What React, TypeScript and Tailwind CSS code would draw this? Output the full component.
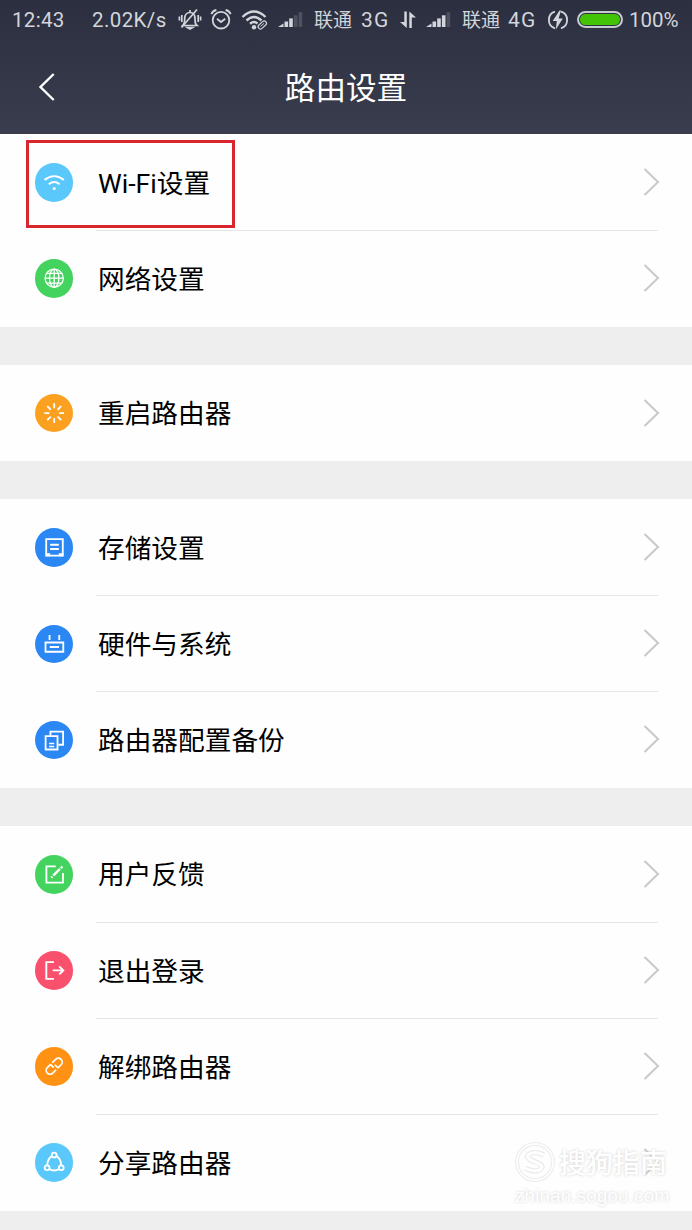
import type { ReactNode } from "react";

type Item = {
  label: string;
  color: string;
  icon: ReactNode;
  marked?: boolean;
};

// every glyph is drawn on a 38x38 box, centred on 19,19
const wifi = (
  <g strokeWidth="1.9" strokeLinecap="butt">
    <path d="M9.4 16.7Q19 9.3 28.6 16.7" />
    <path d="M13.6 21Q19 16.7 24.4 21" />
    <circle cx="19" cy="25.2" r="1.5" fill="white" stroke="none" />
  </g>
);

const globe = (
  <g strokeWidth="1.3">
    <circle cx="19" cy="19" r="9" />
    <ellipse cx="19" cy="19" rx="4.6" ry="9" />
    <path d="M19 10v18M10 19h18M11.8 14.2h14.4M11.8 23.8h14.4" />
  </g>
);

const restart = (
  <path
    strokeWidth="1.8"
    d="M19 9.2v5M19 23.8v5M9.2 19h5M23.8 19h5M12.1 12.1l3.5 3.5M22.4 22.4l3.5 3.5M25.9 12.1l-3.5 3.5M15.6 22.4l-3.5 3.5"
  />
);

const storage = (
  <g strokeWidth="1.8">
    <path d="M11.1 11h16.4v16.4H11.1z" />
    <path d="M15 16.6h8.6M15 20.8h8.6" />
    <path strokeWidth="3" d="M10.6 26.4h4.4M23.6 26.4h4.4" />
  </g>
);

const router = (
  <g strokeWidth="1.8">
    <path d="M10.4 17.3h17.6v9.2H10.4z" />
    <path d="M14.6 21.8h9.2M14.4 9.8v5M24 9.8v5" />
  </g>
);

const copy = (
  <g strokeWidth="1.8">
    <path d="M10.5 15h11.8v13.2H10.5z" />
    <path d="M15.3 14.5v-4h12.5v13h-4.8" />
    <path strokeWidth="1.5" d="M14 22.3h5M14 25.2h5" />
  </g>
);

const edit = (
  <g strokeWidth="1.8">
    <path d="M20.5 11.2h-9.2v16.2h16.4v-9.7" />
    <path strokeWidth="2.4" d="M16 22.5l1.2-1.2M18 20.5l6.7-6.7M25.6 12.9l1.5-1.5" />
  </g>
);

const logout = (
  <g strokeWidth="1.9">
    <path d="M18.8 11h-7.6v16.6h7.6" />
    <path d="M17.5 19.2h10.2M24 15.2l4 4-4 4" />
  </g>
);

const link = (
  <g strokeWidth="1.7" transform="rotate(-45 19 19)">
    <path d="M17.8 15.2h-4.6a3.8 3.8 0 0 0 0 7.6h4.6M20.2 22.8h4.6a3.8 3.8 0 0 0 0-7.6h-4.6M17.6 15.2v4.4M20.4 22.8v-4.4" />
  </g>
);

const share = (
  <g strokeWidth="1.8">
    <circle cx="19" cy="11.9" r="2.4" />
    <circle cx="12" cy="24.5" r="2.4" />
    <circle cx="26" cy="24.5" r="2.4" />
    <path d="M16.7 13Q12.3 15.7 12.2 21.9M21.3 13Q25.7 15.7 25.8 21.9M14.2 25.9Q19 28.5 23.8 25.9" />
  </g>
);

const groups: Item[][] = [
  [
    { label: "Wi-Fi设置", color: "bg-[#5ac8fa]", icon: wifi, marked: true },
    { label: "网络设置", color: "bg-[#44d35e]", icon: globe },
  ],
  [{ label: "重启路由器", color: "bg-[#fba01f]", icon: restart }],
  [
    { label: "存储设置", color: "bg-[#2a87f3]", icon: storage },
    { label: "硬件与系统", color: "bg-[#2a87f3]", icon: router },
    { label: "路由器配置备份", color: "bg-[#2a87f3]", icon: copy },
  ],
  [
    { label: "用户反馈", color: "bg-[#44d35e]", icon: edit },
    { label: "退出登录", color: "bg-[#f9506e]", icon: logout },
    { label: "解绑路由器", color: "bg-[#ff9212]", icon: link },
    { label: "分享路由器", color: "bg-[#5ac8fa]", icon: share },
  ],
];

function Signal({ bars }: { bars: number }) {
  return (
    <svg className="mb-[12px] w-[26px] h-[28px] shrink-0" viewBox="0 0 26 28" fill="#d3d5db">
      <path d="M0 27l5.5-3.5V27z" />
      {[0, 1, 2, 3].map((i) => (
        <rect key={i} x={6.5 + i * 4.7} y={21.5 - i * 3.1} width="3.6" height={5.5 + i * 3.1} opacity={i < bars ? 1 : 0.2} />
      ))}
    </svg>
  );
}

function StatusBar() {
  return (
    <div className="flex items-center h-[40px] pl-[12px] text-[#d3d5db] text-[20.5px] leading-[40px] whitespace-nowrap">
      <span className="w-[80px] shrink-0 tracking-[0.3px]">12:43</span>
      <span className="w-[86px] shrink-0 tracking-[0.4px]">2.02K/s</span>
      <svg className="mb-[2px] w-[24px] h-[24px] shrink-0" viewBox="0 0 24 24" fill="none" stroke="#d3d5db" strokeWidth="1.7">
        <path d="M5.5 18.5h13.5c-2-1.7-2-3-2-7 0-4-2-6-5-6s-5.3 2-5.3 6c0 4 0 5-2 7z" />
        <path d="M3.8 8v7M1.4 9.5v4M20.2 8v7M22.6 9.5v4M19 2.5L3.5 20.5M12 3v2.5" />
        <path d="M9.5 20.5h5l-2.5 1.5z" fill="#d3d5db" />
      </svg>
      <svg className="ml-[7px] w-[24px] h-[24px] shrink-0" viewBox="0 0 24 24" fill="none" stroke="#d3d5db" strokeWidth="1.8">
        <circle cx="12" cy="12.2" r="8.3" />
        <path d="M8 10.7l4 3.3 4.2-3.3M2.3 6.2Q3.7 2.7 7.4 2M21.7 6.2Q20.3 2.7 16.6 2" />
      </svg>
      <svg className="ml-[8px] w-[28px] h-[24px] shrink-0" viewBox="0 0 28 24" fill="none" stroke="#d3d5db" strokeWidth="2.4">
        <path d="M1.5 9Q13 -2 24.5 9M5.5 12.5Q13 5.5 20.5 12.5M9 15.8Q13 12.5 16.5 15.5" />
        <circle cx="13" cy="19.2" r="2.2" fill="#d3d5db" stroke="none" />
        <rect x="16.5" y="14.7" width="9.6" height="4.6" rx="2.3" strokeWidth="1.2" transform="rotate(-42 21.3 17)" />
        <path d="M19.5 18.5l3.6-3.2" strokeWidth="1" />
      </svg>
      <span className="ml-[9px] flex"><Signal bars={2} /></span>
      <span className="ml-[10px] w-[47px] shrink-0 pt-px text-[19px]">联通</span>
      <span className="w-[38px] shrink-0 text-[21px] tracking-[1.2px]">3G</span>
      <svg className="w-[18px] h-[24px] shrink-0" viewBox="0 0 18 24" fill="#d3d5db">
        <path d="M5.3 3.5h2.5V20L1 14h4.3zM10.3 20V3.5l6.7 6h-4.2V20z" />
      </svg>
      <span className="ml-[9px] flex"><Signal bars={3} /></span>
      <span className="ml-[10px] w-[46px] shrink-0 pt-px text-[19px]">联通</span>
      <span className="w-[39px] shrink-0 text-[21px] tracking-[1.2px]">4G</span>
      <svg className="w-[22px] h-[24px] shrink-0" viewBox="0 0 22 24" fill="none" stroke="#d3d5db" strokeWidth="1.8">
        <path d="M8 3.7a8.7 8.7 0 0 0 0 16.6M14 3.7a8.7 8.7 0 0 1 0 16.6" />
        <path d="M12.5 2.5L5.7 13h4.1L8.8 21.5l7-11h-4.2l2.4-8z" fill="#d3d5db" stroke="none" />
      </svg>
      <span className="ml-[8px] mb-[2px] w-[46px] h-[17px] shrink-0 rounded-full border-2 border-[#c6c9cf] p-px">
        <span className="block h-full rounded-full bg-[#43c307]" />
      </span>
      <span className="ml-[6px]">100%</span>
    </div>
  );
}

function Row({ item, last }: { item: Item; last: boolean }) {
  return (
    <div className="relative flex h-[96.1px] pl-[34.6px]">
      <div className={`mt-[29px] size-[38.4px] rounded-full shrink-0 ${item.color}`}>
        <svg className="size-full" viewBox="0 0 38 38" fill="none" stroke="white">
          {item.icon}
        </svg>
      </div>
      <div className={`ml-[23px] mr-[34px] flex h-[96.7px] shrink-0 grow items-center justify-between border-b ${last ? "border-transparent" : "border-[#e7e7e7]"}`}>
        <span className="pl-[2px] pt-[3px] text-[26.7px] text-black">{item.label}</span>
        <svg className="-mr-[2px] w-[17px] h-[28px]" viewBox="0 0 17 28" fill="none" stroke="#c9c9c9" strokeWidth="2">
          <path d="M1.5 1l13.5 13L1.5 27" />
        </svg>
      </div>
      {item.marked && <div className="absolute left-[26px] top-[5.5px] w-[209px] h-[88px] border-3 border-[#d9252e]" />}
    </div>
  );
}

function Watermark() {
  return (
    <div className="absolute left-[514px] top-[1141px] w-[160px] text-white [text-shadow:0_0_3px_#cfcfcf]">
      <div className="flex items-center h-[42px]">
        <svg className="w-[42px] h-[42px] shrink-0" viewBox="0 0 42 42" fill="none">
          <circle cx="21" cy="21" r="18" stroke="#eeeeee" strokeWidth="4" />
          <circle cx="21" cy="21" r="18" stroke="white" strokeWidth="1.5" />
          <path d="M30 14Q20 9 14 14c-3 6 14 7 14 12-2 6-12 4-17 1" stroke="#ebebeb" strokeWidth="5.5" />
          <path d="M30 14Q20 9 14 14c-3 6 14 7 14 12-2 6-12 4-17 1" stroke="white" strokeWidth="3" />
        </svg>
        <span className="ml-[3px] pt-[5px] text-[27px] font-medium whitespace-nowrap">搜狗指南</span>
      </div>
      <div className="pl-px pt-px text-[18.5px] leading-[24px] tracking-[0.3px] font-['Liberation_Sans',sans-serif]">zhinan.sogou.com</div>
    </div>
  );
}

export default function App() {
  return (
    <div className="relative w-[692px] h-[1230px] overflow-hidden bg-[#eeeeee] font-['Roboto','Noto_Sans_CJK_SC',sans-serif]">
      <header className="h-[134.4px] bg-linear-to-b from-[#2b2f40] to-[#393d4d]">
        <StatusBar />
        <div className="flex items-center h-[94px] pl-[38px]">
          <svg className="w-[18px] h-[28px]" viewBox="0 0 18 28" fill="none" stroke="white" strokeWidth="2.4">
            <path d="M15.7 1L2.5 14l13.2 13" />
          </svg>
          <h1 className="grow pt-[3px] pr-[56px] text-center text-[30.6px] text-white">路由设置</h1>
        </div>
      </header>
      <main className="flex flex-col gap-[38.4px]">
        {groups.map((items, i) => (
          <section key={i} className="bg-[#fefefe]">
            {items.map((item, j) => (
              <Row key={item.label} item={item} last={j === items.length - 1} />
            ))}
          </section>
        ))}
      </main>
      <Watermark />
    </div>
  );
}
